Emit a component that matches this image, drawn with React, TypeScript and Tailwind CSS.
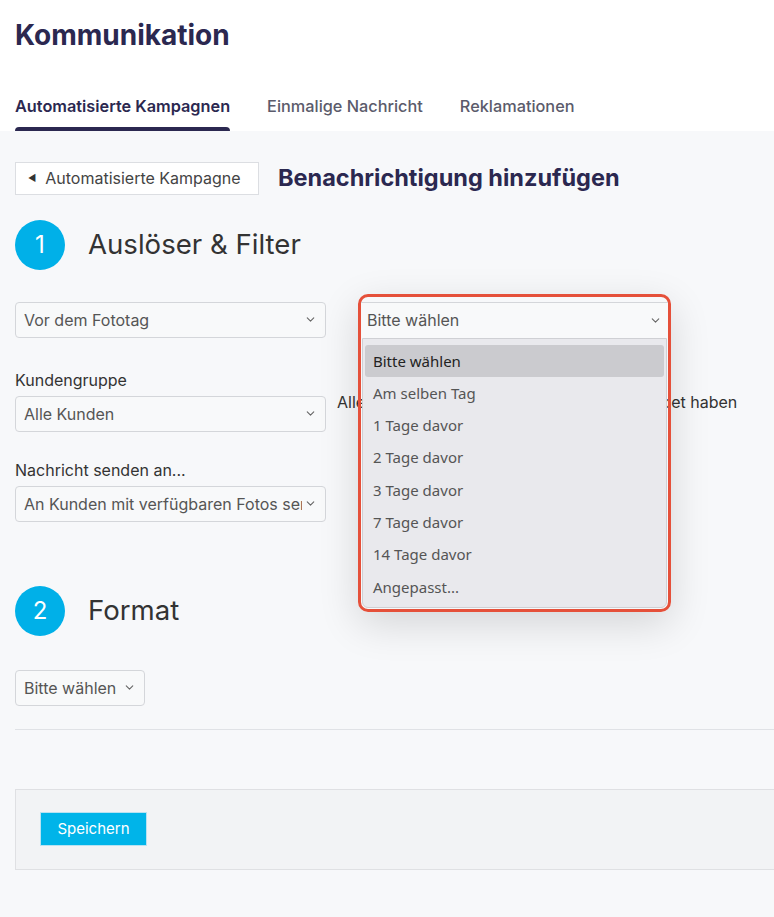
import { ChevronDown } from "lucide-react";

const inter = { fontFamily: "Inter, 'Noto Sans', sans-serif" };

function FakeSelect({
  value,
  className = "",
}: {
  value: string;
  className?: string;
}) {
  return (
    <div
      className={`flex h-[36px] items-center justify-between rounded-[4px] border border-[#d4d6da] bg-[#f8f9fa] pl-[8px] pr-[8px] text-[16px] text-[#555] ${className}`}
    >
      <span className="overflow-hidden whitespace-nowrap">{value}</span>
      <ChevronDown size={13} strokeWidth={2} className="ml-[2px] shrink-0 text-[#666]" />
    </div>
  );
}

function StepTitle({ n, title }: { n: number; title: string }) {
  return (
    <div className="flex items-center">
      <div className="flex h-[50px] w-[50px] items-center justify-center rounded-full bg-[#00b0e8] text-[24px] text-white">
        {n}
      </div>
      <h2 className="ml-[23px] text-[27.6px] font-normal text-[#333]">{title}</h2>
    </div>
  );
}

const options = [
  "Bitte wählen",
  "Am selben Tag",
  "1 Tage davor",
  "2 Tage davor",
  "3 Tage davor",
  "7 Tage davor",
  "14 Tage davor",
  "Angepasst...",
];

export default function App() {
  return (
    <div className="min-h-[917px] w-[774px] overflow-hidden bg-[#f7f8fa]" style={inter}>
      {/* header */}
      <header className="bg-white pl-[15px]">
        <h1 className="pt-[18px] text-[28px] font-bold leading-[34px] text-[#2b2850]">
          Kommunikation
        </h1>
        <nav className="mt-[42px] flex text-[16.3px] font-medium">
          <div className="flex flex-col">
            <span className="font-semibold text-[#2b2850]">Automatisierte Kampagnen</span>
            <div className="mt-[9px] h-[4px] rounded-t-[4px] bg-[#2b2850]" />
          </div>
          <span className="ml-[37px] text-[#5b5b6b]">Einmalige Nachricht</span>
          <span className="ml-[37px] text-[#5b5b6b]">Reklamationen</span>
        </nav>
      </header>

      <main className="pl-[15px]">
        <div className="flex items-center pt-[29px]">
          <div className="flex h-[33px] w-[244px] items-center border border-[#dcdee2] bg-white pl-[12px] text-[16px] text-[#444]">
            <span className="mr-[9px] text-[9px] text-[#333]">◀</span>
            Automatisierte Kampagne
          </div>
          <h2 className="ml-[19px] text-[23.5px] font-bold text-[#2b2850]">
            Benachrichtigung hinzufügen
          </h2>
        </div>

        <div className="mt-[24px]">
          <StepTitle n={1} title="Auslöser & Filter" />
        </div>

        <div className="relative mt-[32px]">
          <FakeSelect value="Vor dem Fototag" className="w-[311px]" />

          <div className="mt-[30px] text-[16px] text-[#333]">Kundengruppe</div>
          <div className="mt-[4px] flex items-start">
            <FakeSelect value="Alle Kunden" className="w-[311px]" />
            <span className="ml-[11px] mt-[-6px] whitespace-nowrap text-[16px] text-[#333]">
              Alle Kunden, die sich im Fotoshop angemeldet haben
            </span>
          </div>

          <div className="mt-[26px] text-[16px] text-[#333]">Nachricht senden an...</div>
          <div className="mt-[4px]">
            <FakeSelect value="An Kunden mit verfügbaren Fotos senden" className="w-[311px]" />
          </div>

          {/* open dropdown with highlight */}
          <div className="absolute left-[343px] top-[-8px] h-[318px] w-[313px] rounded-[10px] border-[3px] border-[#e5503a] shadow-[0_12px_40px_rgba(0,0,0,0.14)]">
            <div className="mt-[5px] flex h-[36px] items-center justify-between border-t border-[#d4d6da] bg-[#f8f9fa] pl-[6px] pr-[6px] text-[16px] text-[#555]">
              <span>Bitte wählen</span>
              <ChevronDown size={13} strokeWidth={2} className="text-[#666]" />
            </div>
            <ul
              className="mx-[1px] h-[270px] rounded-b-[6px] border border-[#cfd0d4] bg-[#e9e9ed] px-[2px] pt-[6px] text-[15px]"
              style={{ fontFamily: "'Noto Sans', 'Open Sans', sans-serif" }}
            >
              {options.map((o, i) => (
                <li
                  key={o}
                  className={`flex h-[32.3px] items-center rounded-[3px] pl-[8px] ${
                    i === 0 ? "bg-[#cbcbcf] text-[#222]" : "text-[#555]"
                  }`}
                >
                  {o}
                </li>
              ))}
            </ul>
          </div>
        </div>

        <div className="mt-[64px]">
          <StepTitle n={2} title="Format" />
        </div>

        <div className="mt-[34px]">
          <FakeSelect value="Bitte wählen" className="w-[130px]" />
        </div>

        <div className="mt-[23px] h-px bg-[#e0e2e6]" />

        <div className="mt-[59px] flex h-[81px] items-center border border-r-0 border-[#dfe0e3] bg-[#f2f3f5] pl-[24px]">
          <button className="h-[34px] w-[107px] border border-[#b8e2f2] bg-[#00b4e9] text-[15px] text-white">
            Speichern
          </button>
        </div>
      </main>
    </div>
  );
}
